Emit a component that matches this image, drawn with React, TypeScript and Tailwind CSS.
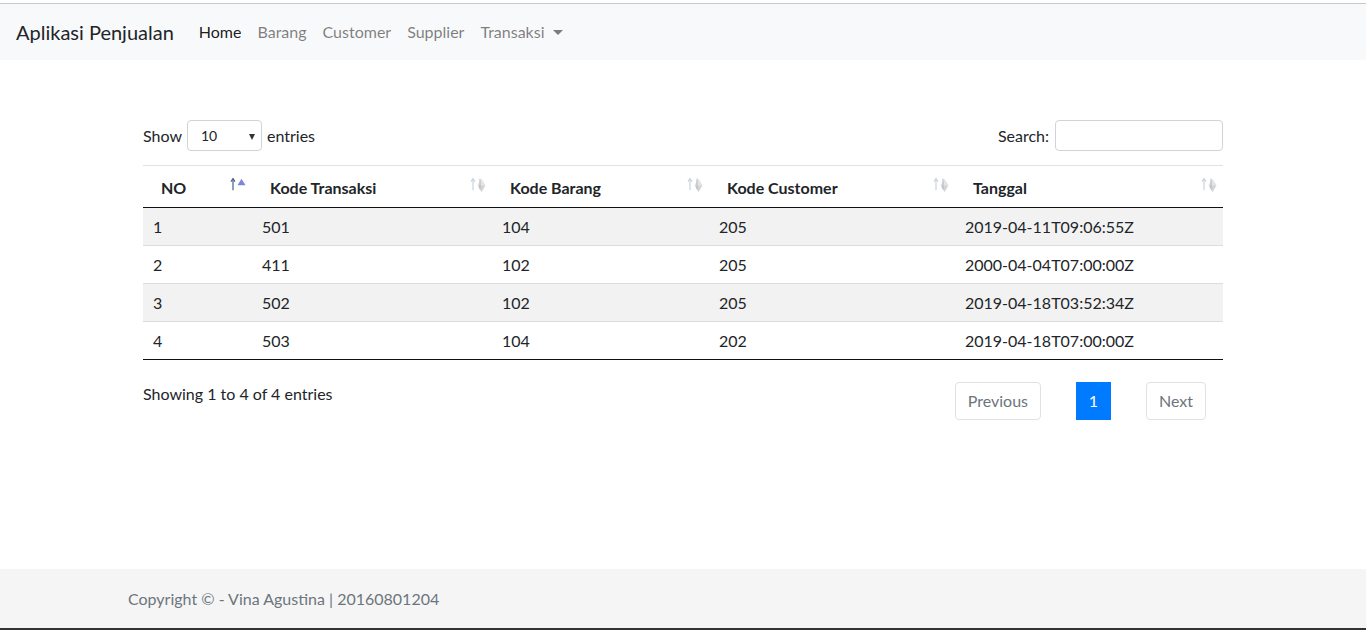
import { useState } from "react";

type Row = {
    no: number;
    transaksi: string;
    barang: string;
    customer: string;
    tanggal: string;
};

const rows: Row[] = [
    { no: 1, transaksi: "501", barang: "104", customer: "205", tanggal: "2019-04-11T09:06:55Z" },
    { no: 2, transaksi: "411", barang: "102", customer: "205", tanggal: "2000-04-04T07:00:00Z" },
    { no: 3, transaksi: "502", barang: "102", customer: "205", tanggal: "2019-04-18T03:52:34Z" },
    { no: 4, transaksi: "503", barang: "104", customer: "202", tanggal: "2019-04-18T07:00:00Z" },
];

const SortIcon = ({ active }: { active?: boolean }) => (
    <svg width="18" height="18" viewBox="0 0 18 18" className="absolute right-[5px] top-1/2 -translate-y-[60%]">
        <path d="M4 14V3" stroke={active ? "#4a5f88" : "#c8d3df"} strokeWidth="1.2" />
        <path d="M2 5.5 L4 2.5 L6 5.5" fill="none" stroke={active ? "#4a5f88" : "#c8d3df"} strokeWidth="1.2" />
        {active ? (
            <path d="M8.5 9 L12.5 2.5 L16.5 9 Z" fill="#7b86e0" />
        ) : (
            <>
                <path d="M8.5 9 L12.5 2.5 L16.5 9 Z" fill="#e4e4e4" />
                <path d="M8.5 9 L12.5 16 L16.5 9 Z" fill="#d4d4d4" />
                <path d="M11 2.5 V13" stroke="#aeb8c4" strokeWidth="1" />
            </>
        )}
    </svg>
);

const App = () => {
    const [search, setSearch] = useState("");

    const cols = [
        { label: "NO", w: "w-[109px]", active: true },
        { label: "Kode Transaksi", w: "w-[240px]" },
        { label: "Kode Barang", w: "w-[217px]" },
        { label: "Kode Customer", w: "w-[246px]" },
        { label: "Tanggal", w: "" },
    ];

    return (
        <div className="flex min-h-[630px] flex-col bg-white font-['Lato',sans-serif] text-[#212529]">
            <div className="h-[3px] bg-white" />
            <nav className="flex h-[57px] items-center border-t border-[#c8c8c8] bg-[#f8f9fa] px-4">
                <span className="mr-[17px] text-[20px] text-[#212529]">Aplikasi Penjualan</span>
                <div className="flex items-center text-[16px]">
                    <span className="px-2 text-black/90">Home</span>
                    <span className="px-2 text-black/50">Barang</span>
                    <span className="px-2 text-black/50">Customer</span>
                    <span className="px-2 text-black/50">Supplier</span>
                    <span className="flex items-center px-2 text-black/50">
                        Transaksi
                        <span className="ml-[9px] h-0 w-0 border-x-[5px] border-t-[5px] border-x-transparent border-t-black/50" />
                    </span>
                </div>
            </nav>

            <main className="mx-auto w-[1080px] flex-1 pt-[60px] text-[16px]">
                <div className="flex items-center justify-between">
                    <div className="flex items-center gap-[5px]">
                        <span>Show</span>
                        <div className="relative flex h-[31px] w-[75px] items-center rounded border border-[#ced4da] pl-[13px] text-[14px]">
                            10
                            <span className="absolute right-[6px] top-[13px] h-0 w-0 border-x-[3.5px] border-t-[6px] border-x-transparent border-t-[#333]" />
                        </div>
                        <span>entries</span>
                    </div>
                    <div className="flex items-center gap-[6px]">
                        <span>Search:</span>
                        <input
                            value={search}
                            onChange={(e) => setSearch(e.target.value)}
                            className="h-[31px] w-[168px] rounded border border-[#ced4da] px-2 text-[14px] outline-none"
                        />
                    </div>
                </div>

                <table className="mt-[14px] w-full border-collapse">
                    <thead>
                        <tr className="h-[42px] border-t border-[#dee2e6] border-b border-b-[#111]">
                            {cols.map((c) => (
                                <th key={c.label} className={`relative ${c.w} px-[18px] pt-[2px] text-left text-[16px] font-bold`}>
                                    {c.label}
                                    <SortIcon active={c.active} />
                                </th>
                            ))}
                        </tr>
                    </thead>
                    <tbody>
                        {rows.map((r, i) => (
                            <tr
                                key={r.no}
                                className={`h-[38px] ${i % 2 === 0 ? "bg-[#f2f2f2]" : "bg-white"} ${i === rows.length - 1 ? "border-b border-[#111]" : "border-b border-[#dddddd]"}`}
                            >
                                <td className="px-[10px] pt-[1px]">{r.no}</td>
                                <td className="px-[10px] pt-[1px]">{r.transaksi}</td>
                                <td className="px-[10px] pt-[1px]">{r.barang}</td>
                                <td className="px-[10px] pt-[1px]">{r.customer}</td>
                                <td className="px-[10px] pt-[1px]">{r.tanggal}</td>
                            </tr>
                        ))}
                    </tbody>
                </table>

                <div className="flex items-start justify-between">
                    <div className="pt-[22px]">Showing 1 to 4 of 4 entries</div>
                    <div className="mr-[17px] mt-[22px] flex items-center gap-[35px]">
                        <span className="flex h-[38px] items-center rounded border border-[#dee2e6] px-[12px] text-[#6c757d]">
                            Previous
                        </span>
                        <span className="flex h-[38px] w-[35px] items-center justify-center bg-[#007bff] text-white">1</span>
                        <span className="flex h-[38px] items-center rounded border border-[#dee2e6] px-[12px] text-[#6c757d]">
                            Next
                        </span>
                    </div>
                </div>
            </main>

            <footer className="flex h-[59px] items-center bg-[#f5f5f5]">
                <div className="mx-auto w-[1110px] text-[16px] text-[#6c757d]">Copyright © - Vina Agustina | 20160801204</div>
            </footer>
            <div className="h-[2px] bg-[#333]" />
        </div>
    );
};

export default App;
